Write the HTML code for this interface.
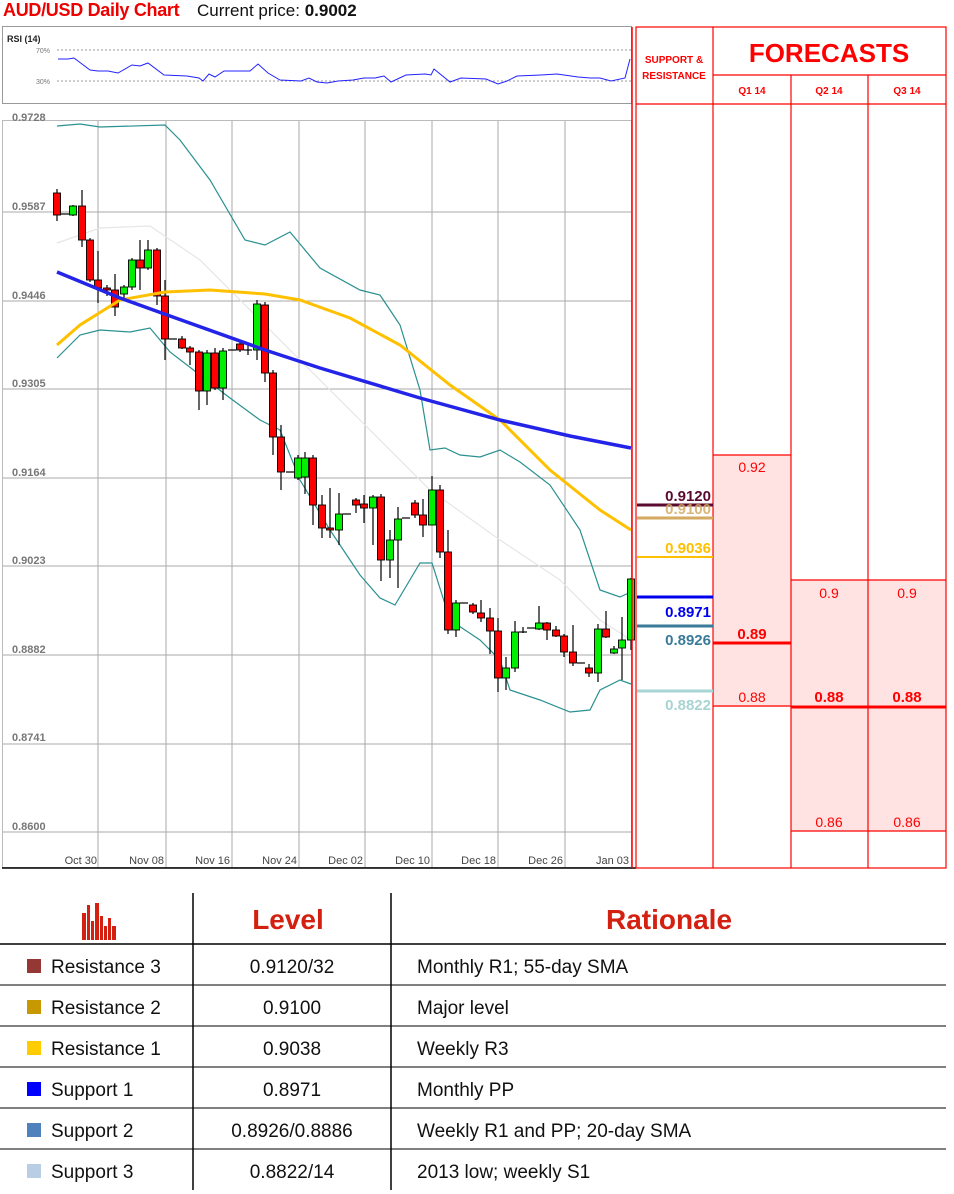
<!DOCTYPE html>
<html><head><meta charset="utf-8"><style>
body{margin:0;width:954px;height:1194px;background:#fff;font-family:"Liberation Sans",sans-serif;position:relative;overflow:hidden}
.a{position:absolute}
</style></head><body>
<div class="a" style="left:3px;top:0px;font-size:18px;font-weight:bold;color:#e00;letter-spacing:-0.3px">AUD/USD Daily Chart</div>
<div class="a" style="left:197px;top:1px;font-size:17px;color:#111">Current price: <b>0.9002</b></div>

<svg class="a" style="left:0;top:0" width="954" height="1194" xmlns="http://www.w3.org/2000/svg">
<!-- RSI panel -->
<rect x="2.5" y="26.5" width="629" height="77" fill="#fff" stroke="#999"/>
<text x="7" y="42" font-size="9" font-weight="bold" fill="#222" font-family="Liberation Sans">RSI (14)</text>
<text x="36" y="53" font-size="7" fill="#777" font-family="Liberation Sans">70%</text>
<text x="36" y="84" font-size="7" fill="#777" font-family="Liberation Sans">30%</text>
<line x1="57" y1="50" x2="631" y2="50" stroke="#777" stroke-dasharray="2,2" stroke-width="0.8"/>
<line x1="57" y1="81" x2="631" y2="81" stroke="#777" stroke-dasharray="2,2" stroke-width="0.8"/>
<polyline fill="none" stroke="#22f" stroke-width="1" points="58,59 68,59 74,58 90,70 98,71 108,71 118,73 132,65 140,66 148,63 164,75 187,76 199,78 203,81 209,74 215,77 224,71 250,71 258,64 268,73 280,80 301,81 309,78 317,82 327,83 338,81 353,80 364,78 375,78 384,76 391,82 406,75 425,74 431,75 434,69 450,82 461,78 486,79 498,84 507,81 517,76 541,75 557,74 578,77 590,78 600,78 611,81 625,78 630,59"/>

<!-- main chart frame -->
<rect x="2.5" y="120.5" width="629" height="747" fill="#fff" stroke="#bbb"/>
<g id="grid" stroke="#aaa" stroke-width="1"></g>
<g font-family="Liberation Sans" font-size="11" font-weight="bold" fill="#777">
<text x="12" y="121">0.9728</text><text x="12" y="210">0.9587</text><text x="12" y="299">0.9446</text>
<text x="12" y="387">0.9305</text><text x="12" y="476">0.9164</text><text x="12" y="564">0.9023</text>
<text x="12" y="653">0.8882</text><text x="12" y="741">0.8741</text><text x="12" y="830">0.8600</text>
</g>
<g font-family="Liberation Sans" font-size="11" fill="#444" text-anchor="end">
<text x="97" y="864">Oct 30</text><text x="164" y="864">Nov 08</text><text x="230" y="864">Nov 16</text>
<text x="297" y="864">Nov 24</text><text x="363" y="864">Dec 02</text><text x="430" y="864">Dec 10</text>
<text x="496" y="864">Dec 18</text><text x="563" y="864">Dec 26</text><text x="629" y="864">Jan 03</text>
</g>
<line x1="2" y1="868" x2="636" y2="868" stroke="#000" stroke-width="1.5"/>

<polyline fill="none" stroke="#e6e6e6" stroke-width="1.2" points="57,243 100,228 150,226 200,260 260,320 300,360 360,420 430,490 500,540 560,580 600,620 631,640"/>
<polyline fill="none" stroke="#2a9090" stroke-width="1.2" points="57,126 80,124 100,127 165,125 180,140 210,180 245,240 265,245 290,232 320,268 360,290 380,295 400,325 420,390 430,450 445,448 460,455 480,457 500,450 520,462 550,485 580,530 600,590 620,597 631,592"/>
<polyline fill="none" stroke="#2a9090" stroke-width="1.2" points="57,358 80,335 100,330 130,332 150,328 170,352 200,375 230,398 260,420 280,430 300,480 330,530 360,575 380,598 395,605 420,563 432,563 450,620 480,640 500,660 510,690 540,700 570,712 590,710 600,690 620,680 631,684"/>
<g id="candles"></g>
<polyline fill="none" stroke="#ffc000" stroke-width="3" points="57,345 80,325 120,300 165,292 210,290 265,294 300,300 350,318 400,345 450,385 500,420 550,470 600,510 631,530"/>
<polyline fill="none" stroke="#2424e8" stroke-width="3.5" points="57,272 120,298 170,316 265,350 320,368 420,398 500,420 570,436 631,448"/>

<!-- right forecast table -->
<rect x="713" y="455" width="78" height="252" fill="#ffe3e3"/>
<rect x="791" y="580" width="155" height="251" fill="#ffe3e3"/>
<g stroke="#f00" stroke-width="1.2" fill="none">
<rect x="636" y="27" width="310" height="841"/>
<line x1="713" y1="75" x2="946" y2="75"/>
<line x1="636" y1="104" x2="946" y2="104"/>
<line x1="713" y1="27" x2="713" y2="868"/>
<line x1="791" y1="75" x2="791" y2="868"/>
<line x1="868" y1="75" x2="868" y2="868"/>
<line x1="713" y1="455" x2="791" y2="455"/>
<line x1="713" y1="706" x2="791" y2="706"/>
<line x1="791" y1="580" x2="946" y2="580"/>
<line x1="791" y1="831" x2="946" y2="831"/>
</g>
<line x1="632" y1="27" x2="632" y2="868" stroke="#f00" stroke-width="1.5"/>
<line x1="713" y1="643" x2="791" y2="643" stroke="#f00" stroke-width="3"/>
<line x1="791" y1="707" x2="946" y2="707" stroke="#f00" stroke-width="3"/>
<g font-family="Liberation Sans" fill="#f00" text-anchor="middle">
<text x="674" y="63" font-size="10" font-weight="bold">SUPPORT &amp;</text>
<text x="674" y="79" font-size="10" font-weight="bold">RESISTANCE</text>
<text x="829" y="62" font-size="26" font-weight="bold">FORECASTS</text>
<text x="752" y="94" font-size="10" font-weight="bold">Q1 14</text>
<text x="829" y="94" font-size="10" font-weight="bold">Q2 14</text>
<text x="907" y="94" font-size="10" font-weight="bold">Q3 14</text>
<text x="752" y="472" font-size="14">0.92</text>
<text x="752" y="639" font-size="15" font-weight="bold">0.89</text>
<text x="752" y="702" font-size="14">0.88</text>
<text x="829" y="598" font-size="14">0.9</text>
<text x="907" y="598" font-size="14">0.9</text>
<text x="829" y="702" font-size="15" font-weight="bold">0.88</text>
<text x="907" y="702" font-size="15" font-weight="bold">0.88</text>
<text x="829" y="827" font-size="14">0.86</text>
<text x="907" y="827" font-size="14">0.86</text>
</g>
<g stroke-width="3">
<line x1="637" y1="505" x2="713" y2="505" stroke="#5a0a30"/>
<line x1="637" y1="518" x2="713" y2="518" stroke="#d4aa60"/>
<line x1="637" y1="557" x2="713" y2="557" stroke="#ffc000" stroke-width="2"/>
<line x1="637" y1="597" x2="713" y2="597" stroke="#0000ee"/>
<line x1="637" y1="626" x2="713" y2="626" stroke="#3a7a9a"/>
<line x1="637" y1="691" x2="713" y2="691" stroke="#a8d4d4"/>
</g>
<g font-family="Liberation Sans" font-size="15" font-weight="bold" text-anchor="end">
<text x="711" y="501" fill="#5a0a30">0.9120</text>
<text x="711" y="514" fill="#d4aa60" opacity="0.85">0.9100</text>
<text x="711" y="553" fill="#ffc000">0.9036</text>
<text x="711" y="617" fill="#0000ee">0.8971</text>
<text x="711" y="645" fill="#3a7a9a">0.8926</text>
<text x="711" y="710" fill="#a8d4d4">0.8822</text>
</g>

<!-- bottom table -->
<g fill="#d42010">
<rect x="82" y="913" width="4" height="27"/><rect x="87" y="905" width="3" height="35"/><rect x="91" y="921" width="3" height="19"/><rect x="95" y="903" width="4" height="37"/><rect x="100" y="916" width="3" height="24"/><rect x="104" y="926" width="3" height="14"/><rect x="108" y="918" width="3" height="22"/><rect x="112" y="926" width="4" height="14"/>
</g>
<g font-family="Liberation Sans" font-weight="bold" fill="#d42010" text-anchor="middle">
<text x="288" y="929" font-size="28">Level</text><text x="669" y="929" font-size="28">Rationale</text>
</g>
<g stroke="#000" stroke-width="1.5">
<line x1="193" y1="893" x2="193" y2="1190"/>
<line x1="391" y1="893" x2="391" y2="1190"/>
<line x1="0" y1="944" x2="946" y2="944"/>
</g>
<g stroke="#000" stroke-width="1">
<line x1="0" y1="985" x2="946" y2="985"/><line x1="0" y1="1026" x2="946" y2="1026"/>
<line x1="0" y1="1067" x2="946" y2="1067"/><line x1="0" y1="1108" x2="946" y2="1108"/>
<line x1="0" y1="1149" x2="946" y2="1149"/>
</g>
<rect x="27" y="959" width="14" height="14" fill="#953735"/>
<rect x="27" y="1000" width="14" height="14" fill="#c89800"/>
<rect x="27" y="1041" width="14" height="14" fill="#ffcc00"/>
<rect x="27" y="1082" width="14" height="14" fill="#0000ff"/>
<rect x="27" y="1123" width="14" height="14" fill="#4f81bd"/>
<rect x="27" y="1164" width="14" height="14" fill="#b9cde5"/>
<g font-family="Liberation Sans" font-size="19" fill="#111">
<text x="51" y="973">Resistance 3</text><text x="51" y="1014">Resistance 2</text><text x="51" y="1055">Resistance 1</text>
<text x="51" y="1096">Support 1</text><text x="51" y="1137">Support 2</text><text x="51" y="1178">Support 3</text>
<text x="417" y="973">Monthly R1; 55-day SMA</text><text x="417" y="1014">Major level</text><text x="417" y="1055">Weekly R3</text>
<text x="417" y="1096">Monthly PP</text><text x="417" y="1137">Weekly R1 and PP; 20-day SMA</text><text x="417" y="1178">2013 low; weekly S1</text>
</g>
<g font-family="Liberation Sans" font-size="19" fill="#111" text-anchor="middle">
<text x="292" y="973">0.9120/32</text><text x="292" y="1014">0.9100</text><text x="292" y="1055">0.9038</text>
<text x="292" y="1096">0.8971</text><text x="292" y="1137">0.8926/0.8886</text><text x="292" y="1178">0.8822/14</text>
</g>
</svg>
<script>
var ns="http://www.w3.org/2000/svg";
function el(p,t,a){var e=document.createElementNS(ns,t);for(var k in a)e.setAttribute(k,a[k]);p.appendChild(e);return e;}
var g=document.getElementById('grid');
[212,301,389,478,566,655,744,832].forEach(function(y){el(g,'line',{x1:3,x2:631,y1:y,y2:y});});
[98,166,232,299,365,432,498,565].forEach(function(x){el(g,'line',{x1:x,x2:x,y1:121,y2:868});});
var c=[[57,193,215,189,221],[65,214,214,214,214],[73,215,206,205,216],[82,206,240,190,247],[90,240,280,238,282],[98,280,288,251,303],[107,288,290,285,296],[115,290,307,274,316],[124,294,287,285,300],[132,287,260,258,290],[140,260,268,240,290],[148,268,250,240,270],[157,250,296,248,305],[165,296,339,280,360],[173,339,339,339,339],[182,339,348,336,349],[190,348,352,346,365],[199,352,391,350,410],[207,391,353,350,405],[215,353,388,348,390],[223,388,351,348,400],[232,350,350,350,350],[240,344,350,342,352],[248,350,350,345,355],[257,350,304,300,360],[265,305,373,302,382],[273,373,437,370,455],[281,437,472,425,490],[290,472,472,472,472],[298,478,458,455,480],[305,477,458,452,494],[313,458,505,455,525],[322,505,528,495,538],[330,528,530,488,538],[339,530,514,493,545],[347,514,514,514,514],[356,500,505,498,513],[364,504,508,495,523],[373,508,497,495,545],[381,497,560,494,581],[390,560,540,530,578],[398,540,519,507,588],[406,518,518,518,518],[415,503,515,500,518],[423,515,525,499,537],[432,525,490,476,525],[440,490,552,485,558],[448,552,630,530,634],[456,630,603,600,637],[464,603,603,603,603],[473,605,612,603,614],[481,613,618,600,622],[490,618,631,608,654],[498,631,678,618,692],[506,678,668,657,690],[515,668,632,621,672],[523,632,632,627,633],[531,628,628,628,628],[539,629,623,606,630],[547,623,630,622,640],[556,630,636,626,637],[564,636,652,634,657],[573,652,663,625,666],[581,663,663,663,663],[589,668,673,664,677],[598,673,629,624,682],[606,629,637,611,638],[614,653,649,646,654],[622,648,640,617,680],[631,640,579,578,650]];
var cg=document.getElementById('candles');
c.forEach(function(d){var x=d[0],o=d[1],cl=d[2];
el(cg,'line',{x1:x,x2:x,y1:d[3],y2:d[4],stroke:'#000','stroke-width':1.2});
var t=Math.min(o,cl),h=Math.abs(o-cl);
if(h<1.5){el(cg,'line',{x1:x-4,x2:x+4,y1:o,y2:o,stroke:'#000','stroke-width':1.2});}
else el(cg,'rect',{x:x-3.5,y:t,width:7,height:h,fill:cl>o?'#f00':'#0e0',stroke:'#000','stroke-width':0.9});
});
</script>
</body></html>
